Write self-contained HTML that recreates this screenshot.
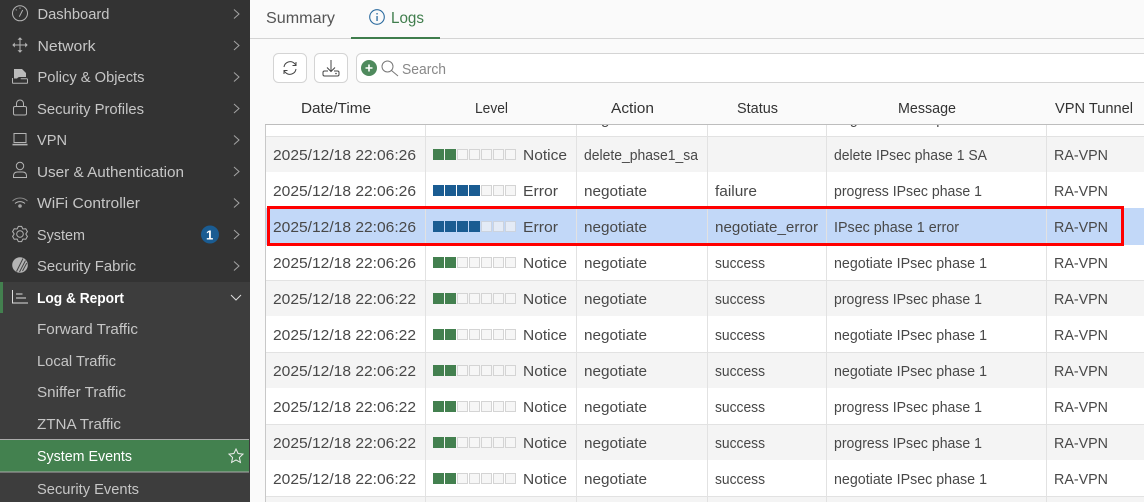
<!DOCTYPE html>
<html><head><meta charset="utf-8"><style>
html,body{margin:0;padding:0;width:1144px;height:502px;overflow:hidden;background:#fafafa}
svg{display:block}
text{font-family:"Liberation Sans",sans-serif;font-size:15px}
.n text{fill:#c6c6c6}
.c{fill:none;stroke:#b4b4b4;stroke-width:1}
.t text{fill:#484848}
.h text{fill:#333}
</style></head><body>
<svg width="1144" height="502" viewBox="0 0 1144 502" xmlns="http://www.w3.org/2000/svg">
<defs>
<clipPath id="top"><rect x="266" y="125" width="878" height="11"/></clipPath>
<g id="e"><rect x=".5" y=".5" width="10" height="10" fill="#f6f6f6" stroke="#d4d4d4"/></g>
<g id="g"><rect width="11" height="11" fill="#43804f"/></g>
<g id="b"><rect width="11" height="11" fill="#1a5c92"/></g>
<g id="N"><use href="#g" x="433"/><use href="#g" x="445"/><use href="#e" x="457"/><use href="#e" x="469"/><use href="#e" x="481"/><use href="#e" x="493"/><use href="#e" x="505"/></g>
<g id="E"><use href="#b" x="433"/><use href="#b" x="445"/><use href="#b" x="457"/><use href="#b" x="469"/><use href="#e" x="481"/><use href="#e" x="493"/><use href="#e" x="505"/></g>
</defs>

<!-- main bg -->
<rect x="250" width="894" height="502" fill="#fafafa"/>
<rect x="250" y="38" width="894" height="1" fill="#d4d4d4"/>
<rect x="351" y="37" width="89" height="2" fill="#3f7d4c"/>
<text x="266" y="23" textLength="69" lengthAdjust="spacingAndGlyphs" fill="#555" style="font-size:16px">Summary</text>
<circle cx="377" cy="17" r="7.300" fill="none" stroke="#2a6a9e" stroke-width="1.100"/>
<rect x="376.400" y="16" width="1.300" height="5" fill="#2a6a9e"/><rect x="376.400" y="13" width="1.300" height="1.500" fill="#2a6a9e"/>
<text x="391" y="23" textLength="33" lengthAdjust="spacingAndGlyphs" fill="#3f7d4c" style="font-size:16px">Logs</text>

<!-- toolbar -->
<rect x="273.500" y="53.500" width="33" height="29" rx="5" fill="#fff" stroke="#d4d4d4"/>
<rect x="314.500" y="53.500" width="33" height="29" rx="5" fill="#fff" stroke="#d4d4d4"/>
<rect x="356.500" y="53.500" width="800" height="29" rx="5" fill="#fff" stroke="#d4d4d4"/>
<g fill="none" stroke="#444" stroke-width="1">
<path d="M284,67 a6.200,6.200 0 0 1 10.500,-3.500 l1.500,1.500"/><path d="M296,62 v3.500 h-3.500"/>
<path d="M296,69 a6.200,6.200 0 0 1 -10.500,3.500 l-1.500,-1.500"/><path d="M284,74 v-3.500 h3.500"/>
<path d="M331,60 v11"/><path d="M327,67.500 l4,4 l4,-4"/>
<path d="M328,71 h-3.500 q-1.500,0 -1.500,1.500 v2 q0,1.500 1.500,1.500 h13 q1.500,0 1.500,-1.500 v-2 q0,-1.500 -1.500,-1.500 h-3.500"/>
</g>
<circle cx="336" cy="73.500" r=".8" fill="#444"/>
<circle cx="369" cy="68" r="8" fill="#4f8a5d"/>
<path d="M369,64.500 v7 M365.500,68 h7" stroke="#fff" stroke-width="1.600"/>
<circle cx="387.500" cy="66.500" r="5.500" fill="none" stroke="#777" stroke-width="1"/>
<path d="M391.500,70.500 L398,76" stroke="#777" stroke-width="1"/>
<text x="402" y="74" textLength="44" lengthAdjust="spacingAndGlyphs" fill="#888">Search</text>

<!-- table rows -->
<rect x="266" y="125" width="878" height="377" fill="#fff"/>
<rect x="266" y="136" width="878" height="36" fill="#f4f4f4"/>
<rect x="266" y="280" width="878" height="36" fill="#f4f4f4"/>
<rect x="266" y="352" width="878" height="36" fill="#f4f4f4"/>
<rect x="266" y="424" width="878" height="36" fill="#f4f4f4"/>
<rect x="266" y="496" width="878" height="6" fill="#f4f4f4"/>
<rect x="266" y="208" width="878" height="37" fill="#c2d8f8"/>
<g fill="#e2e2e2">
<rect x="266" y="136" width="878" height="1"/><rect x="266" y="280" width="878" height="1"/>
<rect x="266" y="352" width="878" height="1"/><rect x="266" y="424" width="878" height="1"/>
<rect x="266" y="496" width="878" height="1"/>
<rect x="425" y="125" width="1" height="377"/><rect x="576" y="125" width="1" height="377"/>
<rect x="707" y="125" width="1" height="377"/><rect x="826" y="125" width="1" height="377"/>
<rect x="1046" y="125" width="1" height="377"/>
</g>
<rect x="265" y="124" width="1" height="378" fill="#c8c8c8"/>
<rect x="265" y="124" width="879" height="1" fill="#bdbdbd"/>

<!-- headers -->
<g class="h">
<text x="301" y="113" textLength="70" lengthAdjust="spacingAndGlyphs">Date/Time</text>
<text x="475" y="113" textLength="33" lengthAdjust="spacingAndGlyphs">Level</text>
<text x="611" y="113" textLength="43" lengthAdjust="spacingAndGlyphs">Action</text>
<text x="737" y="113" textLength="41" lengthAdjust="spacingAndGlyphs">Status</text>
<text x="898" y="113" textLength="58" lengthAdjust="spacingAndGlyphs">Message</text>
<text x="1055" y="113" textLength="78" lengthAdjust="spacingAndGlyphs">VPN Tunnel</text>
</g>

<g class="t">
<g clip-path="url(#top)">
<text x="584" y="124" textLength="63" lengthAdjust="spacingAndGlyphs">negotiate</text>
<text x="834" y="124" textLength="153" lengthAdjust="spacingAndGlyphs">negotiate IPsec phase 1</text>
</g>

<use href="#N" y="149"/>
<text x="273" y="160" textLength="143" lengthAdjust="spacingAndGlyphs">2025/12/18 22:06:26</text>
<text x="523" y="160" textLength="44" lengthAdjust="spacingAndGlyphs">Notice</text>
<text x="584" y="160" textLength="114" lengthAdjust="spacingAndGlyphs">delete_phase1_sa</text>
<text x="834" y="160" textLength="153" lengthAdjust="spacingAndGlyphs">delete IPsec phase 1 SA</text>
<text x="1054" y="160" textLength="54" lengthAdjust="spacingAndGlyphs">RA-VPN</text>

<use href="#E" y="185"/>
<text x="273" y="196" textLength="143" lengthAdjust="spacingAndGlyphs">2025/12/18 22:06:26</text>
<text x="523" y="196" textLength="35" lengthAdjust="spacingAndGlyphs">Error</text>
<text x="584" y="196" textLength="63" lengthAdjust="spacingAndGlyphs">negotiate</text>
<text x="715" y="196" textLength="42" lengthAdjust="spacingAndGlyphs">failure</text>
<text x="834" y="196" textLength="148" lengthAdjust="spacingAndGlyphs">progress IPsec phase 1</text>
<text x="1054" y="196" textLength="54" lengthAdjust="spacingAndGlyphs">RA-VPN</text>

<use href="#b" x="433" y="221"/><use href="#b" x="445" y="221"/><use href="#b" x="457" y="221"/><use href="#b" x="469" y="221"/>
<g fill="#e4ebf6" stroke="#ccd3de"><rect x="481.500" y="221.500" width="10" height="10"/><rect x="493.500" y="221.500" width="10" height="10"/><rect x="505.500" y="221.500" width="10" height="10"/></g>
<text x="273" y="232" textLength="143" lengthAdjust="spacingAndGlyphs">2025/12/18 22:06:26</text>
<text x="523" y="232" textLength="35" lengthAdjust="spacingAndGlyphs">Error</text>
<text x="584" y="232" textLength="63" lengthAdjust="spacingAndGlyphs">negotiate</text>
<text x="715" y="232" textLength="103" lengthAdjust="spacingAndGlyphs">negotiate_error</text>
<text x="834" y="232" textLength="125" lengthAdjust="spacingAndGlyphs">IPsec phase 1 error</text>
<text x="1054" y="232" textLength="54" lengthAdjust="spacingAndGlyphs">RA-VPN</text>

<use href="#N" y="257"/>
<text x="273" y="268" textLength="143" lengthAdjust="spacingAndGlyphs">2025/12/18 22:06:26</text>
<text x="523" y="268" textLength="44" lengthAdjust="spacingAndGlyphs">Notice</text>
<text x="584" y="268" textLength="63" lengthAdjust="spacingAndGlyphs">negotiate</text>
<text x="715" y="268" textLength="50" lengthAdjust="spacingAndGlyphs">success</text>
<text x="834" y="268" textLength="153" lengthAdjust="spacingAndGlyphs">negotiate IPsec phase 1</text>
<text x="1054" y="268" textLength="54" lengthAdjust="spacingAndGlyphs">RA-VPN</text>

<use href="#N" y="293"/>
<text x="273" y="304" textLength="143" lengthAdjust="spacingAndGlyphs">2025/12/18 22:06:22</text>
<text x="523" y="304" textLength="44" lengthAdjust="spacingAndGlyphs">Notice</text>
<text x="584" y="304" textLength="63" lengthAdjust="spacingAndGlyphs">negotiate</text>
<text x="715" y="304" textLength="50" lengthAdjust="spacingAndGlyphs">success</text>
<text x="834" y="304" textLength="148" lengthAdjust="spacingAndGlyphs">progress IPsec phase 1</text>
<text x="1054" y="304" textLength="54" lengthAdjust="spacingAndGlyphs">RA-VPN</text>

<use href="#N" y="329"/>
<text x="273" y="340" textLength="143" lengthAdjust="spacingAndGlyphs">2025/12/18 22:06:22</text>
<text x="523" y="340" textLength="44" lengthAdjust="spacingAndGlyphs">Notice</text>
<text x="584" y="340" textLength="63" lengthAdjust="spacingAndGlyphs">negotiate</text>
<text x="715" y="340" textLength="50" lengthAdjust="spacingAndGlyphs">success</text>
<text x="834" y="340" textLength="153" lengthAdjust="spacingAndGlyphs">negotiate IPsec phase 1</text>
<text x="1054" y="340" textLength="54" lengthAdjust="spacingAndGlyphs">RA-VPN</text>

<use href="#N" y="365"/>
<text x="273" y="376" textLength="143" lengthAdjust="spacingAndGlyphs">2025/12/18 22:06:22</text>
<text x="523" y="376" textLength="44" lengthAdjust="spacingAndGlyphs">Notice</text>
<text x="584" y="376" textLength="63" lengthAdjust="spacingAndGlyphs">negotiate</text>
<text x="715" y="376" textLength="50" lengthAdjust="spacingAndGlyphs">success</text>
<text x="834" y="376" textLength="153" lengthAdjust="spacingAndGlyphs">negotiate IPsec phase 1</text>
<text x="1054" y="376" textLength="54" lengthAdjust="spacingAndGlyphs">RA-VPN</text>

<use href="#N" y="401"/>
<text x="273" y="412" textLength="143" lengthAdjust="spacingAndGlyphs">2025/12/18 22:06:22</text>
<text x="523" y="412" textLength="44" lengthAdjust="spacingAndGlyphs">Notice</text>
<text x="584" y="412" textLength="63" lengthAdjust="spacingAndGlyphs">negotiate</text>
<text x="715" y="412" textLength="50" lengthAdjust="spacingAndGlyphs">success</text>
<text x="834" y="412" textLength="148" lengthAdjust="spacingAndGlyphs">progress IPsec phase 1</text>
<text x="1054" y="412" textLength="54" lengthAdjust="spacingAndGlyphs">RA-VPN</text>

<use href="#N" y="437"/>
<text x="273" y="448" textLength="143" lengthAdjust="spacingAndGlyphs">2025/12/18 22:06:22</text>
<text x="523" y="448" textLength="44" lengthAdjust="spacingAndGlyphs">Notice</text>
<text x="584" y="448" textLength="63" lengthAdjust="spacingAndGlyphs">negotiate</text>
<text x="715" y="448" textLength="50" lengthAdjust="spacingAndGlyphs">success</text>
<text x="834" y="448" textLength="148" lengthAdjust="spacingAndGlyphs">progress IPsec phase 1</text>
<text x="1054" y="448" textLength="54" lengthAdjust="spacingAndGlyphs">RA-VPN</text>

<use href="#N" y="473"/>
<text x="273" y="484" textLength="143" lengthAdjust="spacingAndGlyphs">2025/12/18 22:06:22</text>
<text x="523" y="484" textLength="44" lengthAdjust="spacingAndGlyphs">Notice</text>
<text x="584" y="484" textLength="63" lengthAdjust="spacingAndGlyphs">negotiate</text>
<text x="715" y="484" textLength="50" lengthAdjust="spacingAndGlyphs">success</text>
<text x="834" y="484" textLength="153" lengthAdjust="spacingAndGlyphs">negotiate IPsec phase 1</text>
<text x="1054" y="484" textLength="54" lengthAdjust="spacingAndGlyphs">RA-VPN</text>
</g>

<rect x="268.500" y="207.500" width="854" height="37" fill="none" stroke="#f00" stroke-width="3"/>

<!-- sidebar -->
<rect width="250" height="502" fill="#333"/>
<rect y="282" width="250" height="220" fill="#3d3d3d"/>
<rect y="282" width="3" height="31" fill="#43804f"/>
<rect y="439" width="249" height="33" fill="#43814f"/>
<rect y="439" width="249" height="1" fill="#aaa"/><rect y="471.500" width="249" height="1" fill="#aaa"/>

<g class="n">
<text x="37.500" y="19" textLength="72" lengthAdjust="spacingAndGlyphs">Dashboard</text>
<text x="37.500" y="51" textLength="58" lengthAdjust="spacingAndGlyphs">Network</text>
<text x="37.500" y="82" textLength="107" lengthAdjust="spacingAndGlyphs">Policy &amp; Objects</text>
<text x="37" y="114" textLength="107" lengthAdjust="spacingAndGlyphs">Security Profiles</text>
<text x="37" y="145" textLength="30" lengthAdjust="spacingAndGlyphs">VPN</text>
<text x="37" y="177" textLength="147" lengthAdjust="spacingAndGlyphs">User &amp; Authentication</text>
<text x="37" y="208" textLength="103" lengthAdjust="spacingAndGlyphs">WiFi Controller</text>
<text x="37" y="240" textLength="48" lengthAdjust="spacingAndGlyphs">System</text>
<text x="37" y="271" textLength="99" lengthAdjust="spacingAndGlyphs">Security Fabric</text>
<text x="37" y="303" textLength="87" lengthAdjust="spacingAndGlyphs" style="fill:#fff;font-weight:bold">Log &amp; Report</text>
<text x="37" y="334" textLength="101" lengthAdjust="spacingAndGlyphs">Forward Traffic</text>
<text x="37" y="366" textLength="79" lengthAdjust="spacingAndGlyphs">Local Traffic</text>
<text x="37" y="397" textLength="89" lengthAdjust="spacingAndGlyphs">Sniffer Traffic</text>
<text x="37" y="429" textLength="84" lengthAdjust="spacingAndGlyphs">ZTNA Traffic</text>
<text x="37" y="461" textLength="95" lengthAdjust="spacingAndGlyphs" style="fill:#fff">System Events</text>
<text x="37" y="494" textLength="102" lengthAdjust="spacingAndGlyphs">Security Events</text>
</g>

<!-- chevrons -->
<g fill="none" stroke="#a4a4a4" stroke-width="1">
<path d="M234,9.500 L239,14 L234,18.500"/>
<path d="M234,41 L239,45.500 L234,50"/>
<path d="M234,72.500 L239,77 L234,81.500"/>
<path d="M234,104 L239,108.500 L234,113"/>
<path d="M234,135.500 L239,140 L234,144.500"/>
<path d="M234,167 L239,171.500 L234,176"/>
<path d="M234,198.500 L239,203 L234,207.500"/>
<path d="M234,230 L239,234.500 L234,239"/>
<path d="M234,261.500 L239,266 L234,270.500"/>
<path d="M231,295 L236,300 L241,295" stroke="#ddd"/>
</g>

<circle cx="210" cy="234.500" r="9" fill="#1a5c92"/>
<text x="206" y="239.500" fill="#fff" style="font-size:13px;font-weight:bold">1</text>

<!-- icons -->
<g class="c">
<circle cx="20" cy="13.300" r="7.500"/><path d="M19.300,16.700 L22.700,10"/><path d="M20,7.500 v1.200 M15.800,9.500 l.8,.8"/>
<path d="M20,39 v12 M14,45 h12"/>
<path d="M12.500,78 v4.500 q0,.8 .8,.8 h13.400 q.8,0 .8,-.8 v-3 q0,-.8 -.8,-.8 h-6"/>
<path d="M14,69 H22 L26,73 V77 H19.500 Q18,77 17,78.500 H14 Z" fill="#bbb" stroke="none"/>
<rect x="13.500" y="106.500" width="13" height="8.500" rx="1.500"/><path d="M16.500,106.500 v-3 a3.500,3.500 0 0 1 7,0 v3"/>
<rect x="14" y="133.500" width="12" height="9"/>
<circle cx="20" cy="166" r="3.700"/><path d="M13.500,177.500 v-1.500 q0,-4 4,-4 h5 q4,0 4,4 v1.500 z"/>
<path d="M12.500,201 a11,11 0 0 1 15,0" stroke="#888"/><path d="M15,203.500 a7.500,7.500 0 0 1 10,0"/>
<path d="M18.380,226.370 H21.620 L22.900,228.980 L25.800,228.780 L27.420,231.590 L25.800,234 L27.420,236.410 L25.800,239.220 L22.900,239.020 L21.620,241.630 H18.380 L17.100,239.020 L14.200,239.220 L12.580,236.410 L14.200,234 L12.580,231.590 L14.200,228.780 L17.100,228.980 Z"/>
<circle cx="20" cy="234" r="3.300"/>
<path d="M12.500,290 V303 H28 M16,294 H22.500 M16,298 H26" stroke="#ddd"/>
</g>
<path d="M20,37.300 l2.500,2.500 h-5 z M20,52.700 l2.500,-2.500 h-5 z M12.300,45 l2.500,-2.500 v5 z M27.700,45 l-2.500,-2.500 v5 z" fill="#b4b4b4"/>
<rect x="12.500" y="143.800" width="15" height="1.600" fill="#b4b4b4"/>
<circle cx="20" cy="206" r="1.800" fill="#a4a4a4"/>
<circle cx="20" cy="265" r="7.800" fill="#b4b4b4"/>
<path d="M16.500,271.500 L23,258.500 M19.500,272 L25.500,260.500 M22.500,271 L26.800,263" stroke="#444" stroke-width="1" fill="none"/>

<path d="M236,449 l2.100,4.500 l4.900,.6 l-3.600,3.400 l1,4.900 l-4.400,-2.500 l-4.400,2.500 l1,-4.900 l-3.600,-3.400 l4.900,-.6 z" fill="none" stroke="#eee" stroke-width="1"/>
</svg>
</body></html>
